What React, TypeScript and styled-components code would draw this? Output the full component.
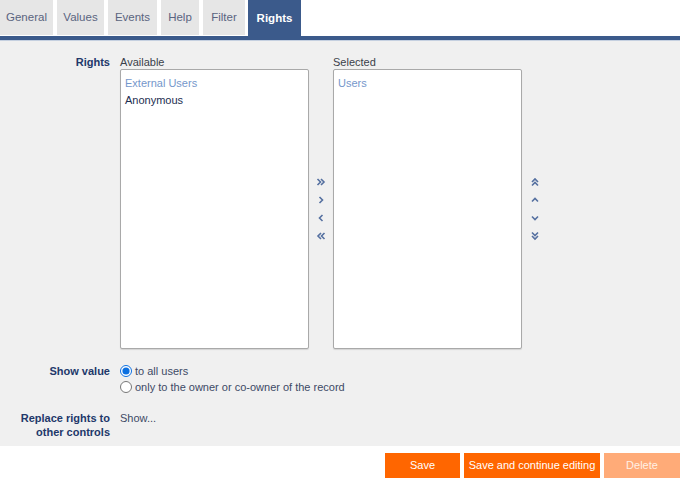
import React from "react";
import styled, { createGlobalStyle } from "styled-components";

const Global = createGlobalStyle`
  html, body { margin: 0; padding: 0; background: #fff; }
  body { font-family: "Liberation Sans", Arial, sans-serif; font-size: 11px; }
  #root { width: 680px; height: 478px; overflow: hidden; }
`;

const Page = styled.div`
  width: 680px;
  height: 478px;
  display: flex;
  flex-direction: column;
  background: #fff;
`;

const TabBar = styled.div`
  display: flex;
  align-items: flex-start;
  gap: 4px;
  height: 36px;
`;

const Tab = styled.div<{ $active?: boolean; $w: number }>`
  width: ${(p) => p.$w}px;
  height: ${(p) => (p.$active ? 36 : 35)}px;
  display: flex;
  align-items: center;
  justify-content: center;
  box-sizing: border-box;
  padding-bottom: 1px;
  background: ${(p) => (p.$active ? "#3b5a8b" : "#e6e6e6")};
  color: ${(p) => (p.$active ? "#fff" : "#5a6480")};
  font-weight: ${(p) => (p.$active ? 700 : 400)};
  font-size: 11.5px;
  cursor: pointer;
`;

const BlueBar = styled.div`
  height: 4px;
  background: #3b5a8b;
  border-bottom: 1px solid #c5d0e0;
`;

const Form = styled.div`
  flex: 0 0 auto;
  height: 405px;
  box-sizing: border-box;
  background: #f0f0f0;
  padding-top: 14px;
  display: flex;
  flex-direction: column;
`;

const Row = styled.div<{ $mt?: number }>`
  display: grid;
  grid-template-columns: 110px 1fr;
  column-gap: 10px;
  margin-top: ${(p) => p.$mt ?? 0}px;
`;

const Label = styled.div`
  text-align: right;
  font-weight: 700;
  color: #22386a;
  line-height: 14px;
`;

const Picker = styled.div`
  display: flex;
  align-items: flex-start;
`;

const ListCol = styled.div`
  display: flex;
  flex-direction: column;
`;

const ListHeader = styled.div`
  color: #3a3f4a;
  line-height: 14px;
  height: 14px;
`;

const ListBox = styled.div`
  width: 189px;
  height: 280px;
  box-sizing: border-box;
  background: #fff;
  border: 1px solid #a9a9a9;
  border-radius: 2px;
  box-shadow: 0 1px 1px rgba(0, 0, 0, 0.12);
  padding: 5px 4px;
`;

const Option = styled.div<{ $group?: boolean }>`
  line-height: 17px;
  color: ${(p) => (p.$group ? "#7597cb" : "#1c2d50")};
  white-space: nowrap;
`;

const ButtonCol = styled.div<{ $w: number }>`
  width: ${(p) => p.$w}px;
  margin-top: 14px;
  height: 280px;
  display: flex;
  flex-direction: column;
  align-items: center;
  justify-content: center;
  padding-top: 0px;
  box-sizing: border-box;
`;

const ArrowBtn = styled.button`
  width: 18px;
  height: 17.7px;
  padding: 0;
  border: 0;
  background: transparent;
  display: flex;
  align-items: center;
  justify-content: center;
  cursor: pointer;
`;

const Radios = styled.div`
  display: flex;
  flex-direction: column;
`;

const RadioLine = styled.label`
  display: flex;
  align-items: center;
  line-height: 16px;
  height: 16px;
  color: #3d4a66;
  white-space: nowrap;
`;

const Radio = styled.input`
  width: 12px;
  height: 12px;
  margin: 0 3px 1px 0;
  accent-color: #0b6fe0;
`;

const Value = styled.div`
  color: #3d4a66;
  line-height: 14px;
`;

const Footer = styled.div`
  flex: 1;
  display: flex;
  justify-content: flex-end;
  align-items: flex-end;
  gap: 4px;
`;

const Btn = styled.button<{ $w: number; $disabled?: boolean }>`
  width: ${(p) => p.$w}px;
  height: 25px;
  border: 0;
  padding: 0 0 1px;
  font-family: inherit;
  font-size: 11px;
  color: ${(p) => (p.$disabled ? "#fff0e4" : "#fff")};
  background: ${(p) => (p.$disabled ? "#ffab78" : "#ff6600")};
  cursor: pointer;
`;

const C = "#5570a0";

const Chev = ({ dir, double }: { dir: "r" | "l" | "u" | "d"; double?: boolean }) => {
  const rot = { r: 0, d: 90, l: 180, u: 270 }[dir];
  return (
    <svg width="10" height="10" viewBox="0 0 10 10" style={{ transform: `rotate(${rot}deg)` }}>
      {double ? (
        <>
          <polyline points="1.5,2 4.5,5 1.5,8" fill="none" stroke={C} strokeWidth="1.6" />
          <polyline points="5,2 8,5 5,8" fill="none" stroke={C} strokeWidth="1.6" />
        </>
      ) : (
        <polyline points="3.5,2 6.5,5 3.5,8" fill="none" stroke={C} strokeWidth="1.6" />
      )}
    </svg>
  );
};

const tabs = [
  { t: "General", w: 53 },
  { t: "Values", w: 47 },
  { t: "Events", w: 49 },
  { t: "Help", w: 38 },
  { t: "Filter", w: 42 },
];

export default function App() {
  return (
    <Page>
      <Global />
      <TabBar>
        {tabs.map((t) => (
          <Tab key={t.t} $w={t.w}>
            {t.t}
          </Tab>
        ))}
        <Tab $active $w={53} style={{ marginLeft: -1 }}>
          Rights
        </Tab>
      </TabBar>
      <BlueBar />
      <Form>
        <Row>
          <Label>Rights</Label>
          <Picker>
            <ListCol>
              <ListHeader>Available</ListHeader>
              <ListBox>
                <Option $group>External Users</Option>
                <Option>Anonymous</Option>
              </ListBox>
            </ListCol>
            <ButtonCol $w={24}>
              <ArrowBtn><Chev dir="r" double /></ArrowBtn>
              <ArrowBtn><Chev dir="r" /></ArrowBtn>
              <ArrowBtn><Chev dir="l" /></ArrowBtn>
              <ArrowBtn><Chev dir="l" double /></ArrowBtn>
            </ButtonCol>
            <ListCol>
              <ListHeader>Selected</ListHeader>
              <ListBox>
                <Option $group>Users</Option>
              </ListBox>
            </ListCol>
            <ButtonCol $w={26}>
              <ArrowBtn><Chev dir="u" double /></ArrowBtn>
              <ArrowBtn><Chev dir="u" /></ArrowBtn>
              <ArrowBtn><Chev dir="d" /></ArrowBtn>
              <ArrowBtn><Chev dir="d" double /></ArrowBtn>
            </ButtonCol>
          </Picker>
        </Row>
        <Row $mt={14}>
          <Label style={{ lineHeight: "16px" }}>Show value</Label>
          <Radios>
            <RadioLine>
              <Radio type="radio" name="sv" defaultChecked />
              to all users
            </RadioLine>
            <RadioLine>
              <Radio type="radio" name="sv" />
              only to the owner or co-owner of the record
            </RadioLine>
          </Radios>
        </Row>
        <Row $mt={16}>
          <Label>
            Replace rights to
            <br />
            other controls
          </Label>
          <Value>Show...</Value>
        </Row>
      </Form>
      <Footer>
        <Btn $w={75}>Save</Btn>
        <Btn $w={136}>Save and continue editing</Btn>
        <Btn $w={76} $disabled>
          Delete
        </Btn>
      </Footer>
    </Page>
  );
}
